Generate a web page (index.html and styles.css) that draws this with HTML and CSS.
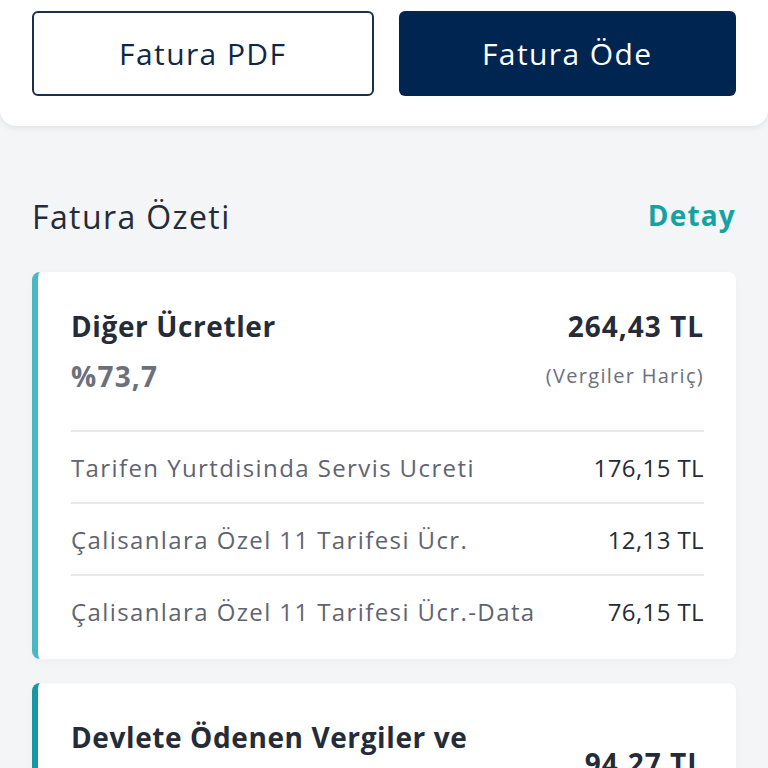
FILE: index.html
```html
<!DOCTYPE html>
<html lang="tr">
<head>
  <meta charset="UTF-8">
  <meta name="viewport" content="width=device-width, initial-scale=1.0">
  <title>Fatura Özeti</title>
  <link rel="stylesheet" href="styles.css">
</head>
<body>

<div class="top-panel">
  <button class="button button-outline">Fatura PDF</button>
  <button class="button button-fill">Fatura Öde</button>
</div>

<div class="summary">
  <div class="summary-head">
    <h2>Fatura Özeti</h2>
    <a class="detail-link" href="#">Detay</a>
  </div>

  <div class="card card-light">
    <div class="card-head">
      <div class="card-title">
        <p class="title">Diğer Ücretler</p>
        <p class="percent">%73,7</p>
      </div>
      <div class="card-total">
        <p class="total">264,43 TL</p>
        <p class="note">(Vergiler Hariç)</p>
      </div>
    </div>
    <div class="row">
      <span class="row-name">Tarifen Yurtdisinda Servis Ucreti</span>
      <span class="row-amount">176,15 TL</span>
    </div>
    <div class="row">
      <span class="row-name">Çalisanlara Özel 11 Tarifesi Ücr.</span>
      <span class="row-amount">12,13 TL</span>
    </div>
    <div class="row">
      <span class="row-name">Çalisanlara Özel 11 Tarifesi Ücr.-Data</span>
      <span class="row-amount">76,15 TL</span>
    </div>
  </div>

  <div class="card card-dark">
    <div class="card-head card-head-center">
      <div class="card-title">
        <p class="title">Devlete Ödenen Vergiler ve<br>Diğer Yükümlülükler</p>
      </div>
      <div class="card-total">
        <p class="total">94,27 TL</p>
      </div>
    </div>
  </div>
</div>

</body>
</html>
```

FILE: styles.css
```css
body {
  font-family: "Open Sans", Lato, sans-serif;
  background-color: #f4f5f7;
  margin: 0;
  padding: 0;
  color: #262b38;
  height: 768px;
  overflow: hidden;
}

p {
  margin: 0;
}

.top-panel {
  background: #fff;
  display: flex;
  gap: 25px;
  padding: 11px 32px 30px;
  border-radius: 0 0 16px 16px;
  box-shadow: 0 2px 6px rgba(0, 0, 0, 0.08);
}

.button {
  flex: 1;
  height: 85px;
  font-family: inherit;
  font-size: 30px;
  letter-spacing: 1.4px;
  border-radius: 6px;
  cursor: pointer;
}

.button-outline {
  background: #fff;
  color: #0d2748;
  border: 2px solid #1c2f4a;
}

.button-fill {
  background: #002550;
  color: #fff;
  border: none;
}

.summary {
  padding: 0 32px;
}

.summary-head {
  display: flex;
  justify-content: space-between;
  align-items: flex-end;
  height: 146px;
}

.summary-head h2 {
  margin: 0 0 34px;
  font-size: 32px;
  font-weight: 400;
  letter-spacing: 1.4px;
  color: #262b38;
}

.detail-link {
  margin-bottom: 38px;
  font-size: 28px;
  font-weight: 700;
  letter-spacing: 1.2px;
  color: #17a2a2;
  text-decoration: none;
}

.card {
  background: #fff;
  border-radius: 8px;
  border-left: 6px solid #4ab7c3;
  padding: 28px 32px 13px 33px;
  margin-bottom: 24px;
  box-shadow: 0 2px 8px rgba(0, 0, 0, 0.03);
}

.card-dark {
  border-left-color: #1797a3;
}

.card-head {
  display: flex;
  justify-content: space-between;
  padding-bottom: 30px;
  border-bottom: 2px solid #e5e7ea;
}

.card-head-center {
  align-items: center;
  border-bottom: none;
}

.title {
  font-size: 28px;
  font-weight: 700;
  letter-spacing: 0.6px;
  line-height: 52px;
  color: #262b38;
}

.percent {
  font-size: 28px;
  font-weight: 700;
  letter-spacing: 1.2px;
  color: #6b707c;
  line-height: 48px;
}

.card-total {
  text-align: right;
}

.total {
  font-size: 28px;
  font-weight: 700;
  letter-spacing: 1px;
  line-height: 52px;
  color: #262b38;
}

.note {
  font-size: 20px;
  letter-spacing: 1.3px;
  color: #6b707c;
  line-height: 48px;
}

.row {
  display: flex;
  justify-content: space-between;
  align-items: center;
  height: 70px;
  border-bottom: 2px solid #e5e7ea;
  font-size: 24px;
}

.row:last-child {
  border-bottom: none;
}

.row-name {
  color: #5f6470;
  letter-spacing: 1.4px;
}

.row-amount {
  color: #262b38;
  font-size: 24px;
  letter-spacing: 0.4px;
}
```
